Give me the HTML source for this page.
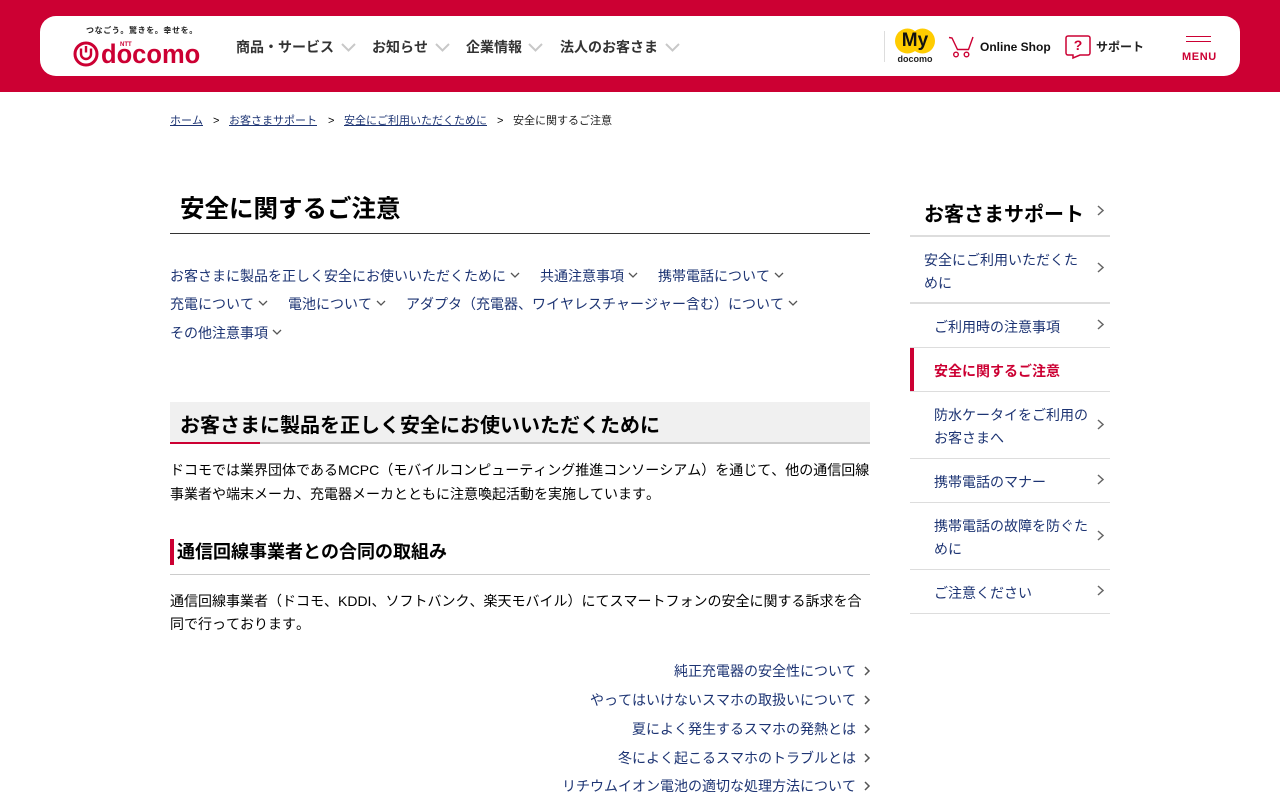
<!DOCTYPE html>
<html lang="ja"><head><meta charset="utf-8"><style>
*{box-sizing:border-box;margin:0;padding:0}
html,body{width:1280px;height:800px;overflow:hidden;background:#fff}
body{font-family:"Liberation Sans","Noto Sans CJK JP",sans-serif;color:#000;position:relative;font-kerning:none}
.a{position:absolute;white-space:nowrap}
.l{color:#1d3473}
svg{position:absolute;overflow:visible}
.line{position:absolute}
</style></head><body>
<div class="line" style="left:0;top:0;width:1280px;height:92px;background:#cc0033"></div>
<div class="line" style="left:40px;top:16px;width:1200px;height:60px;background:#fff;border-radius:16px"></div>
<div class="a" style="left:86px;top:25px;font-size:8px;line-height:11px;font-weight:700;letter-spacing:.6px;color:#222">つなごう。驚きを。幸せを。</div>
<svg style="left:73px;top:40.500px" width="26" height="26" viewBox="0 0 26 26"><circle cx="13" cy="13" r="11" fill="none" stroke="#cc0033" stroke-width="3"/><path d="M8 7.500v5.500a5 5 0 0 0 10 0V7.500" fill="none" stroke="#cc0033" stroke-width="2.400"/><path d="M13 5v6.500" stroke="#cc0033" stroke-width="2.400"/></svg>
<div class="a" style="left:101px;top:37px;font-size:27px;line-height:34px;font-weight:700;color:#cc0033;transform-origin:0 50%;transform:scaleX(.945)">docomo</div>
<div class="a" style="left:120px;top:42px;font-size:6px;line-height:7px;font-weight:700;color:#cc0033">NTT</div>

<div class="a" style="left:236px;top:37px;font-size:14px;line-height:20px;font-weight:700;color:#333">商品・サービス</div>
<svg style="left:341px;top:43px" width="15" height="9"><path d="M1 1l6.500 6.500L14 1" fill="none" stroke="#c8c8c8" stroke-width="2"/></svg>
<div class="a" style="left:372px;top:37px;font-size:14px;line-height:20px;font-weight:700;color:#333">お知らせ</div>
<svg style="left:435px;top:43px" width="15" height="9"><path d="M1 1l6.500 6.500L14 1" fill="none" stroke="#c8c8c8" stroke-width="2"/></svg>
<div class="a" style="left:466px;top:37px;font-size:14px;line-height:20px;font-weight:700;color:#333">企業情報</div>
<svg style="left:528px;top:43px" width="15" height="9"><path d="M1 1l6.500 6.500L14 1" fill="none" stroke="#c8c8c8" stroke-width="2"/></svg>
<div class="a" style="left:560px;top:37px;font-size:14px;line-height:20px;font-weight:700;color:#333">法人のお客さま</div>
<svg style="left:665px;top:43px" width="15" height="9"><path d="M1 1l6.500 6.500L14 1" fill="none" stroke="#c8c8c8" stroke-width="2"/></svg>

<div class="line" style="left:884px;top:31px;width:1px;height:31px;background:#ddd"></div>
<svg style="left:895px;top:28px" width="40" height="26"><circle cx="12.500" cy="13" r="12.500" fill="#ffcc00"/><circle cx="27.500" cy="13" r="12.500" fill="#ffcc00"/></svg>
<div class="a" style="left:895px;top:29px;width:40px;text-align:center;font-size:19px;line-height:24px;font-weight:700;color:#111">My</div>
<div class="a" style="left:895px;top:54px;width:40px;text-align:center;font-size:9px;line-height:11px;font-weight:700;color:#222">docomo</div>
<svg style="left:948px;top:36px" width="26" height="22" fill="none" stroke="#cc0033" stroke-width="1.400"><path d="M1 1.500l3 .5 5.500 11.500h11L25 1"/><circle cx="8" cy="18.500" r="2.300"/><circle cx="18.500" cy="18.500" r="2.300"/></svg>
<div class="a" style="left:980px;top:38px;font-size:12px;line-height:18px;font-weight:700;color:#111">Online Shop</div>
<svg style="left:1065px;top:35px" width="26" height="24" fill="none" stroke="#cc0033" stroke-width="1.500"><path d="M3 1h20a2 2 0 0 1 2 2v15a2 2 0 0 1-2 2H15l-7 3v-3H3a2 2 0 0 1-2-2V3a2 2 0 0 1 2-2z"/></svg>
<div class="a" style="left:1065px;top:36px;width:26px;text-align:center;font-size:14px;line-height:18px;font-weight:700;color:#cc0033">?</div>
<div class="a" style="left:1096px;top:38px;font-size:12px;line-height:18px;font-weight:700;color:#222">サポート</div>
<div class="line" style="left:1186px;top:36px;width:25px;height:1px;background:#cc0033"></div>
<div class="line" style="left:1186px;top:41px;width:25px;height:1px;background:#cc0033"></div>
<div class="a" style="left:1182px;top:50px;font-size:11px;line-height:14px;font-weight:700;letter-spacing:.6px;color:#cc0033">MENU</div>

<div class="a" style="left:170px;top:113px;font-size:11px;line-height:16px"><u class="l">ホーム</u></div>
<div class="a" style="left:213px;top:113px;font-size:11px;line-height:16px">&gt;</div>
<div class="a" style="left:229px;top:113px;font-size:11px;line-height:16px"><u class="l">お客さまサポート</u></div>
<div class="a" style="left:328px;top:113px;font-size:11px;line-height:16px">&gt;</div>
<div class="a" style="left:344px;top:113px;font-size:11px;line-height:16px"><u class="l">安全にご利用いただくために</u></div>
<div class="a" style="left:497px;top:113px;font-size:11px;line-height:16px">&gt;</div>
<div class="a" style="left:513px;top:113px;font-size:11px;line-height:16px;color:#222">安全に関するご注意</div>

<div class="a" style="left:180px;top:192px;font-size:24.500px;line-height:36px;font-weight:700">安全に関するご注意</div>
<div class="line" style="left:170px;top:233px;width:700px;height:1px;background:#333"></div>

<div class="a l" style="left:170px;top:265px;font-size:14px;line-height:22px">お客さまに製品を正しく安全にお使いいただくために</div>
<svg style="left:510px;top:272px" width="10" height="6"><path d="M1 1l4 4 4-4" fill="none" stroke="#555" stroke-width="1.300"/></svg>
<div class="a l" style="left:540px;top:265px;font-size:14px;line-height:22px">共通注意事項</div>
<svg style="left:628px;top:272px" width="10" height="6"><path d="M1 1l4 4 4-4" fill="none" stroke="#555" stroke-width="1.300"/></svg>
<div class="a l" style="left:658px;top:265px;font-size:14px;line-height:22px">携帯電話について</div>
<svg style="left:774px;top:272px" width="10" height="6"><path d="M1 1l4 4 4-4" fill="none" stroke="#555" stroke-width="1.300"/></svg>
<div class="a l" style="left:170px;top:293px;font-size:14px;line-height:22px">充電について</div>
<svg style="left:258px;top:300px" width="10" height="6"><path d="M1 1l4 4 4-4" fill="none" stroke="#555" stroke-width="1.300"/></svg>
<div class="a l" style="left:288px;top:293px;font-size:14px;line-height:22px">電池について</div>
<svg style="left:376px;top:300px" width="10" height="6"><path d="M1 1l4 4 4-4" fill="none" stroke="#555" stroke-width="1.300"/></svg>
<div class="a l" style="left:406px;top:293px;font-size:14px;line-height:22px">アダプタ（充電器、ワイヤレスチャージャー含む）について</div>
<svg style="left:788px;top:300px" width="10" height="6"><path d="M1 1l4 4 4-4" fill="none" stroke="#555" stroke-width="1.300"/></svg>
<div class="a l" style="left:170px;top:322px;font-size:14px;line-height:22px">その他注意事項</div>
<svg style="left:272px;top:329px" width="10" height="6"><path d="M1 1l4 4 4-4" fill="none" stroke="#555" stroke-width="1.300"/></svg>

<div class="line" style="left:170px;top:402px;width:700px;height:40px;background:#f0f0f0"></div>
<div class="line" style="left:170px;top:442px;width:700px;height:2px;background:#ccc"></div>
<div class="line" style="left:170px;top:442px;width:90px;height:2px;background:#cc0033"></div>
<div class="a" style="left:180px;top:411px;font-size:20px;line-height:30px;font-weight:700">お客さまに製品を正しく安全にお使いいただくために</div>
<div class="a" style="left:170px;top:459px;font-size:14px;line-height:23px">ドコモでは業界団体であるMCPC（モバイルコンピューティング推進コンソーシアム）を通じて、他の通信回線</div>
<div class="a" style="left:170px;top:483px;font-size:14px;line-height:23px">事業者や端末メーカ、充電器メーカとともに注意喚起活動を実施しています。</div>
<div class="line" style="left:170px;top:539px;width:4px;height:26px;background:#cc0033"></div>
<div class="a" style="left:177px;top:538px;font-size:18px;line-height:28px;font-weight:700">通信回線事業者との合同の取組み</div>
<div class="line" style="left:170px;top:574px;width:700px;height:1px;background:#ccc"></div>
<div class="a" style="left:170px;top:590px;font-size:14px;line-height:23px">通信回線事業者（ドコモ、KDDI、ソフトバンク、楽天モバイル）にてスマートフォンの安全に関する訴求を合</div>
<div class="a" style="left:170px;top:613px;font-size:14px;line-height:23px">同で行っております。</div>

<div class="a l" style="right:424px;top:660px;font-size:14px;line-height:22px">純正充電器の安全性について</div>
<div class="a l" style="right:424px;top:689px;font-size:14px;line-height:22px">やってはいけないスマホの取扱いについて</div>
<div class="a l" style="right:424px;top:718px;font-size:14px;line-height:22px">夏によく発生するスマホの発熱とは</div>
<div class="a l" style="right:424px;top:747px;font-size:14px;line-height:22px">冬によく起こるスマホのトラブルとは</div>
<div class="a l" style="right:424px;top:775px;font-size:14px;line-height:22px">リチウムイオン電池の適切な処理方法について</div>
<svg style="left:864px;top:666px" width="7" height="10"><path d="M1 1l4 4-4 4" fill="none" stroke="#555" stroke-width="1.500"/></svg>
<svg style="left:864px;top:695px" width="7" height="10"><path d="M1 1l4 4-4 4" fill="none" stroke="#555" stroke-width="1.500"/></svg>
<svg style="left:864px;top:724px" width="7" height="10"><path d="M1 1l4 4-4 4" fill="none" stroke="#555" stroke-width="1.500"/></svg>
<svg style="left:864px;top:753px" width="7" height="10"><path d="M1 1l4 4-4 4" fill="none" stroke="#555" stroke-width="1.500"/></svg>
<svg style="left:864px;top:781px" width="7" height="10"><path d="M1 1l4 4-4 4" fill="none" stroke="#555" stroke-width="1.500"/></svg>

<div class="a" style="left:924px;top:200px;font-size:20px;line-height:30px;font-weight:700">お客さまサポート</div>
<div class="line" style="left:910px;top:235px;width:200px;height:2px;background:#ddd"></div>
<div class="a l" style="left:924px;top:249px;font-size:14px;line-height:23px">安全にご利用いただくた<br>めに</div>
<div class="line" style="left:910px;top:302px;width:200px;height:2px;background:#ddd"></div>
<div class="a l" style="left:934px;top:316px;font-size:14px;line-height:22px">ご利用時の注意事項</div>
<div class="line" style="left:910px;top:347px;width:200px;height:1px;background:#ddd"></div>
<div class="line" style="left:910px;top:348px;width:4px;height:43px;background:#cc0033"></div>
<div class="a" style="left:934px;top:360px;font-size:14px;line-height:22px;font-weight:700;color:#cc0033">安全に関するご注意</div>
<div class="line" style="left:910px;top:391px;width:200px;height:1px;background:#ddd"></div>
<div class="a l" style="left:934px;top:404px;font-size:14px;line-height:23px">防水ケータイをご利用の<br>お客さまへ</div>
<div class="line" style="left:910px;top:458px;width:200px;height:1px;background:#ddd"></div>
<div class="a l" style="left:934px;top:471px;font-size:14px;line-height:22px">携帯電話のマナー</div>
<div class="line" style="left:910px;top:502px;width:200px;height:1px;background:#ddd"></div>
<div class="a l" style="left:934px;top:515px;font-size:14px;line-height:23px">携帯電話の故障を防ぐた<br>めに</div>
<div class="line" style="left:910px;top:569px;width:200px;height:1px;background:#ddd"></div>
<div class="a l" style="left:934px;top:582px;font-size:14px;line-height:22px">ご注意ください</div>
<div class="line" style="left:910px;top:613px;width:200px;height:1px;background:#ddd"></div>
<svg style="left:1097px;top:204.500px" width="8" height="11"><path d="M1 1l5 4.500-5 4.500" fill="none" stroke="#666" stroke-width="1.500"/></svg>
<svg style="left:1097px;top:262px" width="8" height="11"><path d="M1 1l5 4.500-5 4.500" fill="none" stroke="#666" stroke-width="1.500"/></svg>
<svg style="left:1097px;top:318.500px" width="8" height="11"><path d="M1 1l5 4.500-5 4.500" fill="none" stroke="#666" stroke-width="1.500"/></svg>
<svg style="left:1097px;top:418.500px" width="8" height="11"><path d="M1 1l5 4.500-5 4.500" fill="none" stroke="#666" stroke-width="1.500"/></svg>
<svg style="left:1097px;top:473.500px" width="8" height="11"><path d="M1 1l5 4.500-5 4.500" fill="none" stroke="#666" stroke-width="1.500"/></svg>
<svg style="left:1097px;top:529.500px" width="8" height="11"><path d="M1 1l5 4.500-5 4.500" fill="none" stroke="#666" stroke-width="1.500"/></svg>
<svg style="left:1097px;top:584.500px" width="8" height="11"><path d="M1 1l5 4.500-5 4.500" fill="none" stroke="#666" stroke-width="1.500"/></svg>
</body></html>
